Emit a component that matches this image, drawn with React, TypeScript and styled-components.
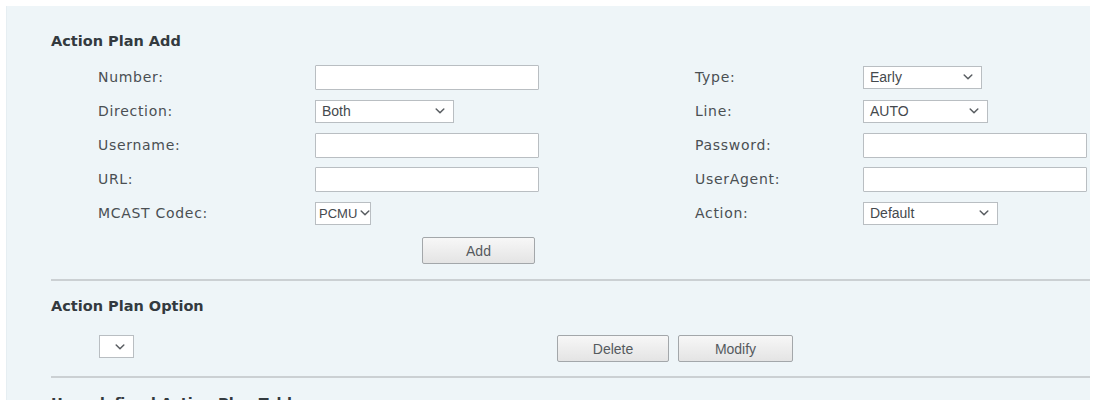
import { createGlobalStyle, styled } from 'styled-components'

const GlobalStyle = createGlobalStyle`
  html, body {
    margin: 0;
    padding: 0;
    background: #ffffff;
  }
  body {
    font-family: "DejaVu Sans", Verdana, sans-serif;
  }
`

const Chevron = () => (
  <svg width="10" height="6" viewBox="0 0 10 6" fill="none">
    <path d="M1.2 1 L5 4.8 L8.8 1" stroke="#5a5e62" strokeWidth="1.5" strokeLinecap="round" strokeLinejoin="round" />
  </svg>
)

const Select = ({ width, value, tight }: { width: number; value?: string; tight?: boolean }) => (
  <SelectBox $width={width} $tight={tight}>
    <span>{value}</span>
    <Chevron />
  </SelectBox>
)

const App = () => {
  return (
    <>
      <GlobalStyle />
      <Panel>
        <SectionTitle>Action Plan Add</SectionTitle>
        <FormGrid>
          <Label>Number:</Label>
          <TextInput type="text" $width={224} />
          <Label>Type:</Label>
          <Select width={119} value="Early" />

          <Label>Direction:</Label>
          <Select width={139} value="Both" />
          <Label>Line:</Label>
          <Select width={125} value="AUTO" />

          <Label>Username:</Label>
          <TextInput type="text" $width={224} />
          <Label>Password:</Label>
          <TextInput type="password" $width={224} />

          <Label>URL:</Label>
          <TextInput type="text" $width={224} />
          <Label>UserAgent:</Label>
          <TextInput type="text" $width={224} />

          <Label>MCAST Codec:</Label>
          <Select width={56} value="PCMU" tight />
          <Label>Action:</Label>
          <Select width={135} value="Default" />
        </FormGrid>
        <AddRow>
          <Button $width={113}>Add</Button>
        </AddRow>

        <Divider />

        <SectionTitle $top={15}>Action Plan Option</SectionTitle>
        <OptionRow>
          <Select width={35} />
          <ButtonGroup>
            <Button $width={112}>Delete</Button>
            <Button $width={115}>Modify</Button>
          </ButtonGroup>
        </OptionRow>

        <Divider $top={14} />

        <SectionTitle $top={15}>User-defined Action Plan Table</SectionTitle>
      </Panel>
    </>
  )
}

const Panel = styled.div`
  margin: 6px 5px 0 6px;
  height: 394px;
  padding: 25px 0 0 44px;
  box-sizing: border-box;
  background: #eef5f8;
  border-left: 1px solid #e6eef2;
`

const SectionTitle = styled.h2<{ $top?: number }>`
  margin: ${(p) => p.$top ?? 0}px 0 0 0;
  font-size: 14.5px;
  line-height: 20px;
  font-weight: bold;
  color: #333a3f;
`

const FormGrid = styled.div`
  margin: 9px 0 0 47px;
  display: grid;
  grid-template-columns: 217px 380px 168px 224px;
  grid-auto-rows: 34px;
  align-items: center;
`

const Label = styled.span`
  font-size: 14px;
  letter-spacing: 0.7px;
  color: #4a4f53;
`

const TextInput = styled.input<{ $width: number }>`
  width: ${(p) => p.$width}px;
  height: 25px;
  box-sizing: border-box;
  border: 1px solid #b9bec2;
  border-radius: 1px;
  background: #ffffff;
  padding: 0 4px;
  margin: 0;
  outline: none;
`

const SelectBox = styled.div<{ $width: number; $tight?: boolean }>`
  width: ${(p) => p.$width}px;
  height: 23px;
  box-sizing: border-box;
  border: 1px solid #b9bec2;
  background: #ffffff;
  display: flex;
  align-items: center;
  justify-content: ${(p) => (p.$tight ? 'flex-start' : 'space-between')};
  gap: 3px;
  padding: ${(p) => (p.$tight ? '0 2px 0 3px' : '0 8px 0 6px')};
  font-family: "Liberation Sans", Arial, sans-serif;
  font-size: ${(p) => (p.$tight ? 13 : 14)}px;
  color: #45494d;

  svg {
    flex-shrink: 0;
  }
`

const Button = styled.button<{ $width: number }>`
  width: ${(p) => p.$width}px;
  height: 27px;
  margin: 0;
  padding: 0;
  border: 1px solid #a3a7aa;
  border-radius: 2px;
  background: linear-gradient(#f7f7f7, #e4e4e4);
  font-family: "Liberation Sans", Arial, sans-serif;
  font-size: 14px;
  color: #555a5e;
`

const AddRow = styled.div`
  margin: 7px 0 0 371px;
`

const Divider = styled.div<{ $top?: number }>`
  margin-top: ${(p) => p.$top ?? 15}px;
  height: 2px;
  background: #cbd0d3;
`

const OptionRow = styled.div`
  margin: 19px 0 0 48px;
  display: flex;
  align-items: flex-start;
`

const ButtonGroup = styled.div`
  margin-left: 423px;
  display: flex;
  gap: 9px;
`

export default App
